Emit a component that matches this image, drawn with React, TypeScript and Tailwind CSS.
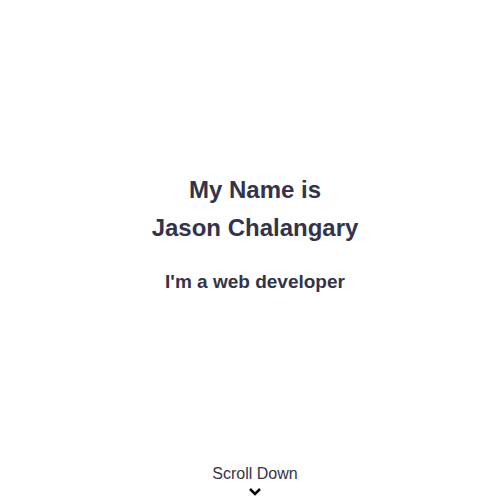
import React from "react";

const Hero: React.FC = () => {
  return (
    <section className="relative h-screen w-full bg-white pl-[10px] text-[#33334a] font-['Liberation_Sans',Arial,sans-serif]">
      <div className="flex h-full flex-col items-center justify-center pb-[36px] text-center">
        <h1 className="text-[24px] font-bold leading-[38px]">
          My Name is
          <br />
          Jason Chalangary
        </h1>
        <h2 className="mt-[23px] text-[19px] font-bold leading-[24px]">
          I'm a web developer
        </h2>
      </div>
      <div className="absolute bottom-[3px] left-[10px] right-0 flex flex-col items-center">
        <span className="text-[16px] leading-[20px]">Scroll Down</span>
        <svg
          width="14"
          height="10"
          viewBox="0 0 14 10"
          className="mt-[3px] text-black"
          fill="none"
          stroke="currentColor"
          strokeWidth="2.5"
        >
          <path d="M2 2l5 5 5-5" />
        </svg>
      </div>
    </section>
  );
};

export default function App() {
  return <Hero />;
}
